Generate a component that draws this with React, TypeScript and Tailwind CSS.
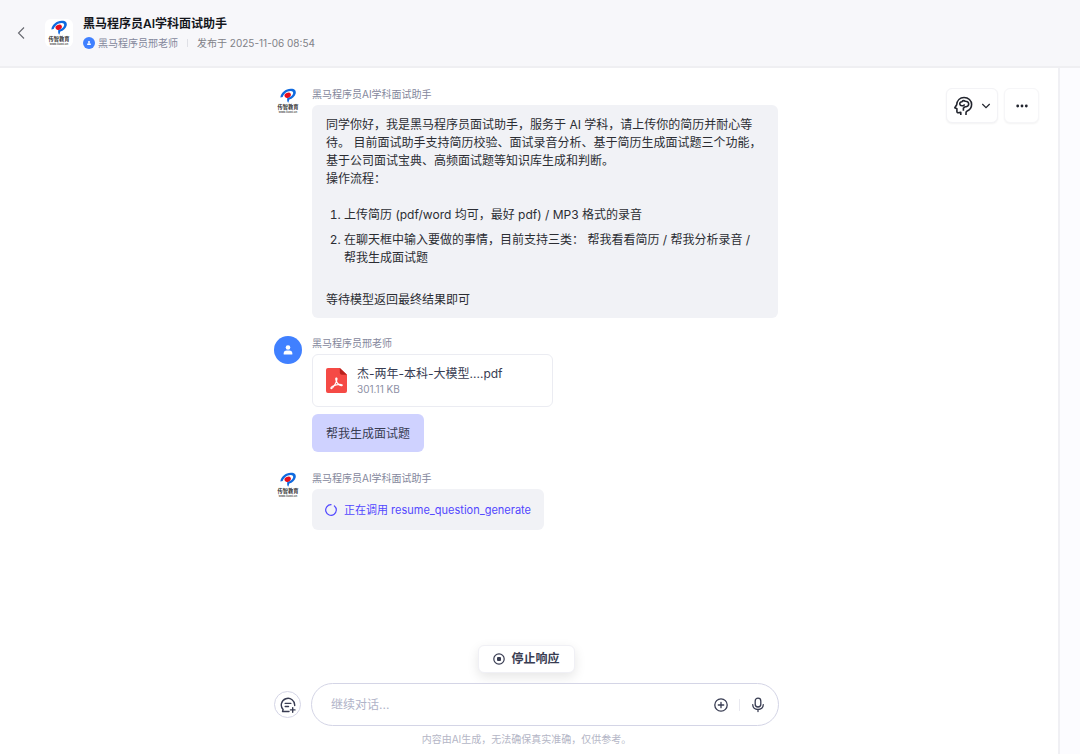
import React from "react";

const BOT_NAME = "黑马程序员AI学科面试助手";
const USER_NAME = "黑马程序员邢老师";

const Logo = () => (
  <svg viewBox="0 0 28 28" className="size-7 shrink-0" role="img" aria-label="传智教育">
    <path
      d="M6.400 10.600C6.600 5.600 11.600 1.900 16.800 1.700c3.800-.1 5.600 1.900 4.900 4.900-.7 3-3.400 5.200-6.400 6l-1 3.200c-1-.9-1.400-2.600-1-5.100 3.100-.4 5.300-2 5.800-4.200.4-1.700-.6-2.600-2.600-2.500-3.500.2-6.700 2.500-7.800 6.100z"
      fill="#0f6adf"
    />
    <ellipse cx="13.700" cy="8.200" rx="3.300" ry="2.500" transform="rotate(-25 13.700 8.200)" fill="#e60e1e" />
    <text
      x="14"
      y="22.300"
      textAnchor="middle"
      fontSize="5.300"
      fontWeight="700"
      fill="#333"
      fontFamily="'Noto Sans CJK SC', sans-serif"
    >
      传智教育
    </text>
    <text
      x="14"
      y="26"
      textAnchor="middle"
      fontSize="2.800"
      fontWeight="700"
      fill="#555"
      fontFamily="'Liberation Sans', sans-serif"
    >
      www.itcast.cn
    </text>
  </svg>
);

const UserAvatar = ({ className }: { className: string }) => (
  <svg viewBox="0 0 28 28" className={className} aria-hidden="true">
    <circle cx="14" cy="14" r="14" fill="#4080ff" />
    <circle cx="14" cy="11.500" r="2.300" fill="#fff" />
    <path d="M9.700 18.400v-1.200c0-1.800 1.200-2.800 2.900-2.800h2.800c1.700 0 2.900 1 2.900 2.800v1.200z" fill="#fff" />
  </svg>
);

const BrainIcon = () => (
  <svg
    viewBox="0 0 20 20"
    className="size-5"
    fill="none"
    stroke="#22252e"
    strokeWidth="1.600"
    strokeLinejoin="round"
    aria-hidden="true"
  >
    <path d="M7.800 19v-2.600l-2.600.3c-.8 0-1.300-.5-1.300-1.300v-2.700l-2.100-.9 1.900-3C4 4.300 7 1.500 11 1.500c4.400 0 7.600 3 7.600 7 0 3-1.600 5.200-4.400 6.400-.9.400-1.200 1-1.200 1.800V19" />
    <path d="M10.400 14.800v-2.600l1.900-1.500h.9c1.600-.2 2.500-1.200 2.500-2.600 0-1.900-1.600-3-3.400-2.900-1.200-.7-2.700-.4-3.400.5-1.500.1-2.300 1.200-2.100 2.400.2 1.100 1.100 1.700 2.200 1.700h1.200l1.500-1.300" />
  </svg>
);

const PdfIcon = () => (
  <svg viewBox="0 0 22 26" className="h-[25px] w-[21px] shrink-0" aria-hidden="true">
    <path d="M2 0h12.500L22 7v17a2 2 0 0 1-2 2H2a2 2 0 0 1-2-2V2a2 2 0 0 1 2-2z" fill="#f54a45" />
    <path d="M14.500 0 22 7h-5.500a2 2 0 0 1-2-2z" fill="#b9221d" />
    <path
      d="M11 10.300c-1-.2-1 1.400-.2 3.200 1 2.300 2.800 4.500 5.200 4.900 1.300.2 1.500-1 .2-1.200-2.600-.5-6.200.2-8.800 1.500-1.800.9-2.600 2-2.200 2.600.5.700 2-.6 3.200-2.500 1.300-2 2.400-4.300 2.900-6.200.3-1.200.3-2.200-.3-2.300z"
      fill="none"
      stroke="#fff"
      strokeWidth="1.200"
    />
  </svg>
);

const ChatPlusIcon = () => (
  <svg
    viewBox="0 0 16 16"
    className="size-4"
    fill="none"
    stroke="#383c52"
    strokeWidth="1.400"
    strokeLinecap="round"
    strokeLinejoin="round"
    aria-hidden="true"
  >
    <path d="M14.700 8.500A6.700 6.700 0 1 0 3.100 12.600L2.500 14.500H9M5.200 6.400h5.600M5.200 9.500h3.300M12.700 10.600v4.600M10.400 12.900H15" />
  </svg>
);

const Message = ({
  avatar,
  name,
  children,
}: {
  avatar: React.ReactNode;
  name: string;
  children: React.ReactNode;
}) => (
  <div className="flex items-start gap-2.5">
    {avatar}
    <div className="flex min-w-0 flex-1 flex-col items-start">
      <div className="mb-1 text-[10px] leading-[14px] text-[#84879c]">{name}</div>
      {children}
    </div>
  </div>
);

const Header = () => (
  <header className="flex h-[68px] shrink-0 items-center border-b-2 border-[#efeff2] bg-[#f7f7fa] pl-[15px]">
    <button type="button" aria-label="返回" className="flex w-3 justify-center">
      <svg viewBox="0 0 8 14" className="h-3.5 w-2" fill="none" stroke="#66686f" strokeWidth="1.100" aria-hidden="true">
        <path d="M7 1.500 1.500 7 7 12.500" />
      </svg>
    </button>
    <div className="ml-[18px] rounded-md bg-white">
      <Logo />
    </div>
    <div className="ml-2.5">
      <h1 className="text-xs leading-[18px] font-semibold text-[#14161c]">{BOT_NAME}</h1>
      <div className="mt-0.5 flex items-center text-[10px] leading-4">
        <UserAvatar className="size-3" />
        <span className="ml-[3px] text-[#84879c]">{USER_NAME}</span>
        <span className="mx-[9px] h-2 w-px bg-[#dfe0e6]" />
        <span className="text-[#808187]">发布于 2025-11-06 08:54</span>
      </div>
    </div>
  </header>
);

const Tools = () => (
  <div className="absolute top-5 right-[19px] flex gap-1.5">
    <button
      type="button"
      aria-label="模型"
      className="flex h-[35px] w-[52px] items-center justify-center gap-2 rounded-md border border-[#f3f3f6] bg-white shadow-xs"
    >
      <BrainIcon />
      <svg viewBox="0 0 10 6" className="h-1.5 w-2.5" fill="none" stroke="#22252e" strokeWidth="1.200" aria-hidden="true">
        <path d="m1.300 1 3.700 3.700L8.700 1" />
      </svg>
    </button>
    <button
      type="button"
      aria-label="更多"
      className="flex h-[35px] w-[35px] items-center justify-center rounded-md border border-[#f6f6f8] bg-white shadow-xs"
    >
      <svg viewBox="0 0 12 4" className="h-1 w-3" fill="#22252e" aria-hidden="true">
        <circle cx="1.700" cy="2" r="1.400" />
        <circle cx="6" cy="2" r="1.400" />
        <circle cx="10.300" cy="2" r="1.400" />
      </svg>
    </button>
  </div>
);

const Composer = () => (
  <footer className="mx-auto flex w-full max-w-[510px] flex-col items-center pr-[5px] pb-2">
    <button
      type="button"
      className="mb-2.5 flex h-7 items-center gap-1.5 rounded-md border border-[#f0f0f5] bg-white px-3.5 text-xs font-semibold text-[#383c52] shadow-[0_4px_12px_rgba(0,0,0,0.1)]"
    >
      <svg viewBox="0 0 12 12" className="size-3" fill="none" stroke="#383c52" strokeWidth="1.200" aria-hidden="true">
        <circle cx="6" cy="6" r="5.200" />
        <rect x="4" y="4" width="4" height="4" rx="1" fill="#383c52" stroke="none" />
      </svg>
      停止响应
    </button>
    <div className="flex w-full items-center gap-2.5">
      <button
        type="button"
        aria-label="新建会话"
        className="flex size-[27px] shrink-0 items-center justify-center rounded-full border border-[#d4d5e6]"
      >
        <ChatPlusIcon />
      </button>
      <div className="flex h-[43px] min-w-0 flex-1 items-center rounded-full border border-[#d4d5e6] bg-white pr-[13px] pl-[19px]">
        <input
          type="text"
          aria-label="继续对话"
          placeholder="继续对话..."
          className="min-w-0 flex-1 text-xs text-[#383c52] outline-none placeholder:text-[#b0b3c8]"
        />
        <button type="button" aria-label="添加附件">
          <svg viewBox="0 0 14 14" className="size-3.5" fill="none" stroke="#383c52" strokeWidth="1.300" strokeLinecap="round" aria-hidden="true">
            <circle cx="7" cy="7" r="6.200" />
            <path d="M7 4.300v5.400M4.300 7h5.400" />
          </svg>
        </button>
        <span className="mx-[11px] h-3 w-px bg-[#e9e9f0]" />
        <button type="button" aria-label="语音输入">
          <svg viewBox="0 0 14 16" className="h-4 w-3.5" fill="none" stroke="#383c52" strokeWidth="1.300" strokeLinecap="round" aria-hidden="true">
            <rect x="4.200" y="1.200" width="5.600" height="8.800" rx="2.800" />
            <path d="M1.700 7.600c0 3 2.300 4.900 5.300 4.900s5.300-1.900 5.300-4.900M7 12.500v2" />
          </svg>
        </button>
      </div>
    </div>
    <p className="mt-1.5 text-[10px] leading-[14px] text-[#b4b6c6]">内容由AI生成，无法确保真实准确，仅供参考。</p>
  </footer>
);

const App = () => {
  return (
    <div lang="zh-CN" className="flex min-h-screen flex-col bg-white font-['Inter','Noto_Sans_CJK_SC',sans-serif]">
      <Header />
      <div className="flex flex-1">
        <main className="relative flex min-w-0 flex-1 flex-col">
          <Tools />
          <div className="mx-auto flex w-full max-w-[510px] flex-1 flex-col gap-[18px] pt-[19px] pr-1.5">
            <Message avatar={<Logo />} name={BOT_NAME}>
              <div className="rounded-md bg-[#f1f2f6] px-3.5 pt-[11px] pb-[9px] text-xs leading-[18px] text-[#2b2d33]">
                <p>
                  同学你好，我是黑马程序员面试助手，服务于 AI 学科，请上传你的简历并耐心等待。
                  目前面试助手支持简历校验、面试录音分析、基于简历生成面试题三个功能，基于公司面试宝典、高频面试题等知识库生成和判断。
                </p>
                <p>操作流程：</p>
                <ol className="mt-[18px] mb-6 list-decimal space-y-[7px] pl-[18px]">
                  <li>上传简历 (pdf/word 均可，最好 pdf) / MP3 格式的录音</li>
                  <li>在聊天框中输入要做的事情，目前支持三类： 帮我看看简历 / 帮我分析录音 / 帮我生成面试题</li>
                </ol>
                <p>等待模型返回最终结果即可</p>
              </div>
            </Message>

            <Message avatar={<UserAvatar className="size-7 shrink-0" />} name={USER_NAME}>
              <div className="flex h-[53px] w-[241px] items-center gap-2.5 rounded-md border border-[#ebecf2] px-[13px]">
                <PdfIcon />
                <div>
                  <div className="text-xs leading-4 text-[#383c52]">杰-两年-本科-大模型....pdf</div>
                  <div className="text-[10px] leading-[14px] text-[#8d90a5]">301.11 KB</div>
                </div>
              </div>
              <div className="mt-[7px] mb-px rounded-md bg-[#cfd2ff] px-3.5 pt-[11px] pb-[9px] text-xs leading-[18px] text-[#383c52]">
                帮我生成面试题
              </div>
            </Message>

            <Message avatar={<Logo />} name={BOT_NAME}>
              <div className="flex items-center gap-[7px] rounded-md bg-[#f1f2f6] px-[13px] pt-3 pb-[11px] text-[11px] leading-[18px] text-[#5147ff]">
                <svg viewBox="0 0 12 12" className="size-3" fill="none" stroke="#5147ff" strokeWidth="1.200" strokeLinecap="round" aria-hidden="true">
                  <path d="M7.800 1A5.300 5.300 0 1 1 4.200 1" transform="rotate(20 6 6)" />
                </svg>
                正在调用 resume_question_generate
              </div>
            </Message>
          </div>
          <Composer />
        </main>
        <aside className="w-[22px] shrink-0 border-l-2 border-[#f0f0f4] bg-[#fcfcff]" />
      </div>
    </div>
  );
};

export default App;
